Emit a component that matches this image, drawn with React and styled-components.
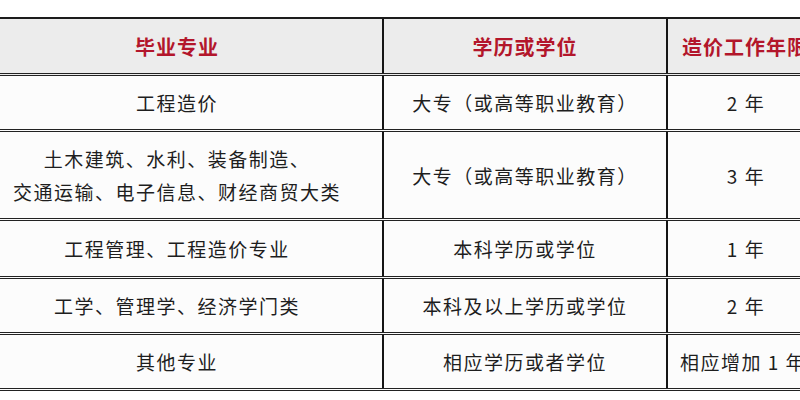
import React from 'react';
import styled, { createGlobalStyle } from 'styled-components';

const GlobalStyle = createGlobalStyle`
  html, body {
    margin: 0;
    padding: 0;
    background: #ffffff;
    overflow: hidden;
  }
  body {
    font-family: 'Noto Sans CJK SC', 'Noto Sans', sans-serif;
  }
`;

const rows = [
  { major: ['工程造价'], degree: '大专（或高等职业教育）', years: '2 年', h: 53 },
  {
    major: ['土木建筑、水利、装备制造、', '交通运输、电子信息、财经商贸大类'],
    degree: '大专（或高等职业教育）',
    years: '3 年',
    h: 86,
  },
  { major: ['工程管理、工程造价专业'], degree: '本科学历或学位', years: '1 年', h: 55 },
  { major: ['工学、管理学、经济学门类'], degree: '本科及以上学历或学位', years: '2 年', h: 53 },
  { major: ['其他专业'], degree: '相应学历或者学位', years: '相应增加 1 年', h: 53 },
];

export default function App() {
  return (
    <>
      <GlobalStyle />
      <Page>
        <Table>
          <HeadRow>
            <HeadCell>毕业专业</HeadCell>
            <HeadCell $divider>学历或学位</HeadCell>
            <HeadCell $divider $left>造价工作年限</HeadCell>
          </HeadRow>
          {rows.map((r, i) => (
            <Row key={i} $h={r.h}>
              <Cell>
                <Lines>
                  {r.major.map((m) => (
                    <span key={m}>{m}</span>
                  ))}
                </Lines>
              </Cell>
              <Cell $divider>{r.degree}</Cell>
              <Cell $divider $left={r.years.length > 4}>{r.years}</Cell>
            </Row>
          ))}
        </Table>
      </Page>
    </>
  );
}

const Page = styled.div`
  width: 800px;
  height: 400px;
  overflow: hidden;
  background: #ffffff;
  padding-top: 17px;
  box-sizing: border-box;
`;

const Table = styled.div`
  display: flex;
  flex-direction: column;
  width: 852px;
  margin-left: -28px;
  border-top: 2px solid #1c1c1c;
`;

const HeadRow = styled.div`
  display: grid;
  grid-template-columns: 410px 284px 158px;
  height: 54px;
  background: #ececec;
  border-bottom: 3px double #222;
`;

const Row = styled.div`
  display: grid;
  grid-template-columns: 410px 284px 158px;
  height: ${(p) => p.$h}px;
  background: #fcfcfc;
  border-bottom: 3px double #222;
`;

const HeadCell = styled.div`
  display: flex;
  align-items: center;
  justify-content: ${(p) => (p.$left ? 'flex-start' : 'center')};
  padding-left: ${(p) => (p.$left ? '14px' : '0')};
  border-left: ${(p) => (p.$divider ? '2px solid #151515' : 'none')};
  color: #b3162b;
  font-size: 20px;
  font-weight: 700;
  letter-spacing: 1px;
  white-space: nowrap;
`;

const Cell = styled.div`
  display: flex;
  align-items: center;
  justify-content: ${(p) => (p.$left ? 'flex-start' : 'center')};
  padding-left: ${(p) => (p.$left ? '12px' : '0')};
  border-left: ${(p) => (p.$divider ? '2px solid #151515' : 'none')};
  color: #1e1e1e;
  font-size: 19px;
  letter-spacing: 1.5px;
  white-space: nowrap;
`;

const Lines = styled.div`
  display: flex;
  flex-direction: column;
  align-items: center;
  line-height: 33px;
`;
